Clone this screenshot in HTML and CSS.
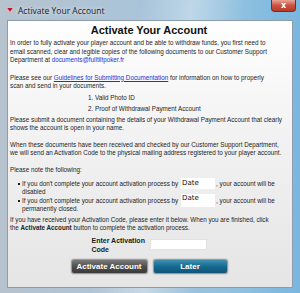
FILE: index.html
```html
<!DOCTYPE html>
<html lang="en">
<head>
    <meta charset="UTF-8">
    <title>Activate Your Account</title>
    <link rel="stylesheet" href="styles.css">
</head>
<body>
    <div class="window">
        <div class="titlebar">
            <svg class="app-icon" width="8" height="6" viewBox="0 0 8 6">
                <polygon points="0.5,0.5 7.5,0.5 4,5.5" fill="#c8102e" stroke="#f2c6c9" stroke-width="0.8"/>
            </svg>
            <span class="title">Activate Your Account</span>
            <button class="close">x</button>
        </div>
        <div class="content">
            <h1>Activate Your Account</h1>
            <p class="first">In order to fully activate your player account and be able to withdraw funds, you first need to<br>
                email scanned, clear and legible copies of the following documents to our Customer Support<br>
                Department at <span class="mail">documents@fulltiltpoker.fr</span></p>
            <p class="gap">Please see our <a href="#">Guidelines for Submitting Documentation</a> for information on how to properly<br>
                scan and send in your documents.</p>
            <ol class="docs">
                <li>1. Valid Photo ID</li>
                <li>2. Proof of Withdrawal Payment Account</li>
            </ol>
            <p>Please submit a document containing the details of your Withdrawal Payment Account that clearly<br>
                shows the account is open in your name.</p>
            <p class="gap tight">When these documents have been received and checked by our Customer Support Department,<br>
                we will send an Activation Code to the physical mailing address registered to your player account.</p>
            <p class="gap tight">Please note the following:</p>
            <ul class="notes">
                <li>If you don't complete your account activation process by <span class="date">Date</span>, your account will be<br>disabled</li>
                <li>If you don't complete your account activation process by <span class="date tall">Date</span>, your account will be<br>permanently closed.</li>
            </ul>
            <p class="small-gap">If you have received your Activation Code, please enter it below. When you are finished, click<br>
                the <b>Activate Account</b> button to complete the activation process.</p>
            <div class="code-row">
                <label class="code-label">Enter Activation<br>Code</label>
                <input class="code-input" type="text">
            </div>
            <div class="buttons">
                <button class="btn btn-dark">Activate Account</button>
                <button class="btn btn-blue">Later</button>
            </div>
        </div>
    </div>
</body>
</html>
```

FILE: styles.css
```css
body {
    margin: 0;
    padding: 0;
    background: #6b9fc4;
    font-family: "Liberation Sans", Arial, sans-serif;
}
.window {
    width: 300px;
    height: 293px;
    box-sizing: border-box;
    display: flex;
    flex-direction: column;
    padding: 0 7px 5px 7px;
    background:
        linear-gradient(100deg, rgba(255,255,255,0) 40%, rgba(255,255,255,0.35) 55%, rgba(255,255,255,0) 70%),
        linear-gradient(90deg, #b7c3ce 0%, #aac4d9 45%, #8fc0e0 80%, #79b6de 100%);
}
.titlebar {
    height: 20px;
    display: flex;
    align-items: center;
    position: relative;
}
.app-icon {
    margin: 0 4px 0 -1px;
}
.title {
    font-family: "Open Sans", sans-serif;
    font-size: 8.5px;
    color: #1b1b1b;
    text-shadow: 0 0 4px rgba(255,255,255,0.9);
}
.close {
    position: absolute;
    right: -3px;
    top: 0;
    width: 25px;
    height: 12px;
    padding: 0;
    border: 1px solid #7a2a22;
    border-top: none;
    border-radius: 0 0 4px 4px;
    background: linear-gradient(#e9a597, #c9533f 50%, #b93a26);
    color: white;
    font-family: "DejaVu Sans", sans-serif;
    font-weight: bold;
    font-size: 8px;
    line-height: 10px;
}
.content {
    flex: 1;
    border: 1px solid #8d9cab;
    background: linear-gradient(#ffffff 0%, #f3f3f3 40%, #e5e5e5 100%);
    padding: 2px 4px 0 2px;
    color: #1c1c1c;
    font-size: 6.3px;
    line-height: 8.5px;
    white-space: nowrap;
}
h1 {
    margin: 0 0 2px;
    font-size: 11px;
    line-height: 14px;
    text-align: center;
    color: #111;
}
p {
    margin: 2.5px 0 0;
}
p.first {
    margin: 0;
}
p.gap {
    margin-top: 9px;
}
p.tight {
    margin-top: 8px;
}
p.small-gap {
    margin-top: 2px;
}
.mail {
    color: #1a33d6;
}
a {
    color: #1a33d6;
}
.docs {
    list-style: none;
    margin: 3px 0 0 78px;
    padding: 0;
}
.docs li {
    margin-bottom: 2.5px;
}
.notes {
    list-style: none;
    margin: 5.5px 0 0;
    padding: 0 0 0 12px;
}
.notes li {
    position: relative;
}
.notes li::before {
    content: "";
    position: absolute;
    left: -4px;
    top: 3px;
    width: 2px;
    height: 2px;
    background: #1c1c1c;
}
.date {
    display: inline-block;
    width: 34px;
    height: 11px;
    margin: -2px 1px;
    padding-left: 1px;
    vertical-align: middle;
    box-sizing: border-box;
    background: white;
    font-family: "DejaVu Sans", sans-serif;
    font-size: 7px;
    line-height: 10px;
    color: #111;
}
.date.tall {
    height: 13px;
    margin: -3px 1px;
    line-height: 9px;
}
.code-row {
    display: flex;
    justify-content: center;
    margin-top: 3px;
}
.code-label {
    width: 58px;
    font-weight: bold;
    font-size: 7px;
    line-height: 9px;
}
.code-input {
    width: 57px;
    height: 11px;
    margin-top: 3px;
    box-sizing: border-box;
    border: 1px solid #e2e2e2;
    background: white;
}
.buttons {
    display: flex;
    justify-content: center;
    gap: 5px;
    margin-top: 5px;
}
.btn {
    height: 15px;
    padding: 0;
    border: 1px solid #9a9a9a;
    border-radius: 3px;
    color: white;
    font-family: "Liberation Sans", Arial, sans-serif;
    font-weight: bold;
    font-size: 8px;
    box-shadow: 0 0 1px #333;
}
.btn-dark {
    width: 77px;
    background: linear-gradient(#7c7c7c, #4e4e4e 50%, #3a3a3a);
}
.btn-blue {
    width: 75px;
    background: linear-gradient(#3f8fb0, #17698f 50%, #0e5578);
}
```
